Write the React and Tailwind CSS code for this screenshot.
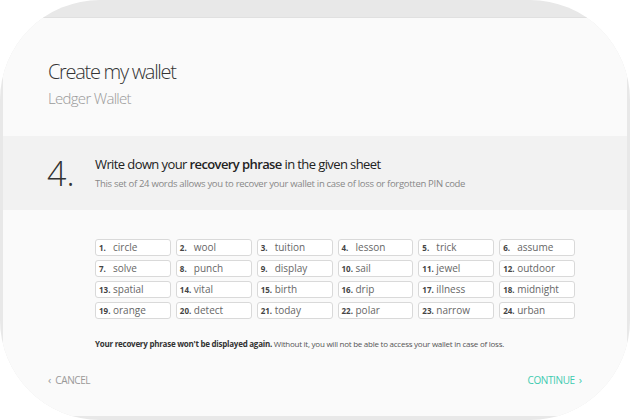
import React from 'react';

const words = [
  'circle', 'wool', 'tuition', 'lesson', 'trick', 'assume',
  'solve', 'punch', 'display', 'sail', 'jewel', 'outdoor',
  'spatial', 'vital', 'birth', 'drip', 'illness', 'midnight',
  'orange', 'detect', 'today', 'polar', 'narrow', 'urban',
];

const WordBox = ({ index, word }) => (
  <div className="h-[17px] bg-white border border-[#d9d9d9] rounded-[3px] flex items-center pl-[3px]">
    <span className="w-[14px] text-[8px] font-bold text-[#444]">{index}.</span>
    <span className="text-[10px] text-[#666]">{word}</span>
  </div>
);

const App = () => {
  return (
    <div className="w-[630px] h-[420px] bg-white" style={{ fontFamily: '"Open Sans", "Liberation Sans", sans-serif' }}>
      <div className="w-full h-full rounded-[100px] overflow-hidden bg-[#e8e8e8] pt-[17px] px-[3px] pb-[4px]">
        <div className="h-full bg-[#fafafa] border-t border-[#e0e0e0] flex flex-col">
          {/* title */}
          <div className="pl-[45px] pt-[42px] pb-[28px]">
            <h1 className="text-[20px] leading-[24px] font-light text-[#333] tracking-[-1.3px]">Create my wallet</h1>
            <p className="mt-[4px] text-[15px] leading-[20px] font-light text-[#999] tracking-[-0.7px]">Ledger Wallet</p>
          </div>

          {/* step band */}
          <div className="h-[74px] bg-[#f2f2f2] flex items-center pl-[44px]">
            <div className="w-[48px] text-[34px] leading-[40px] font-light text-[#333]">4.</div>
            <div className="flex flex-col">
              <div className="text-[13px] leading-[18px] text-[#222] tracking-[-0.6px]">
                Write down your <span className="font-semibold">recovery phrase</span> in the given sheet
              </div>
              <div className="mt-[4px] text-[9.5px] leading-[14px] text-[#888] tracking-[-0.3px]">
                This set of 24 words allows you to recover your wallet in case of loss or forgotten PIN code
              </div>
            </div>
          </div>

          {/* words */}
          <div className="pl-[92px] pt-[29px]">
            <div className="w-[480px] grid grid-cols-6 gap-x-[5px] gap-y-[4px]">
              {words.map((w, i) => (
                <WordBox key={w} index={i + 1} word={w} />
              ))}
            </div>
            <p className="mt-[19px] text-[8px] leading-[12px] text-[#555] tracking-[-0.25px]">
              <span className="font-bold text-[#333]">Your recovery phrase won't be displayed again.</span> Without it, you will not be able to access your wallet in case of loss.
            </p>
          </div>

          {/* footer */}
          <div className="mt-[23px] flex items-center justify-between pl-[45px] pr-[45px] text-[10px] leading-[14px]">
            <button className="flex items-center gap-[4px] text-[#999]">
              <span className="text-[11px]">‹</span>
              <span className="uppercase tracking-[-0.4px]">Cancel</span>
            </button>
            <button className="flex items-center gap-[4px] text-[#3ecbb0]">
              <span className="uppercase tracking-[-0.4px]">Continue</span>
              <span className="text-[11px]">›</span>
            </button>
          </div>
        </div>
      </div>
    </div>
  );
};

export default App;
